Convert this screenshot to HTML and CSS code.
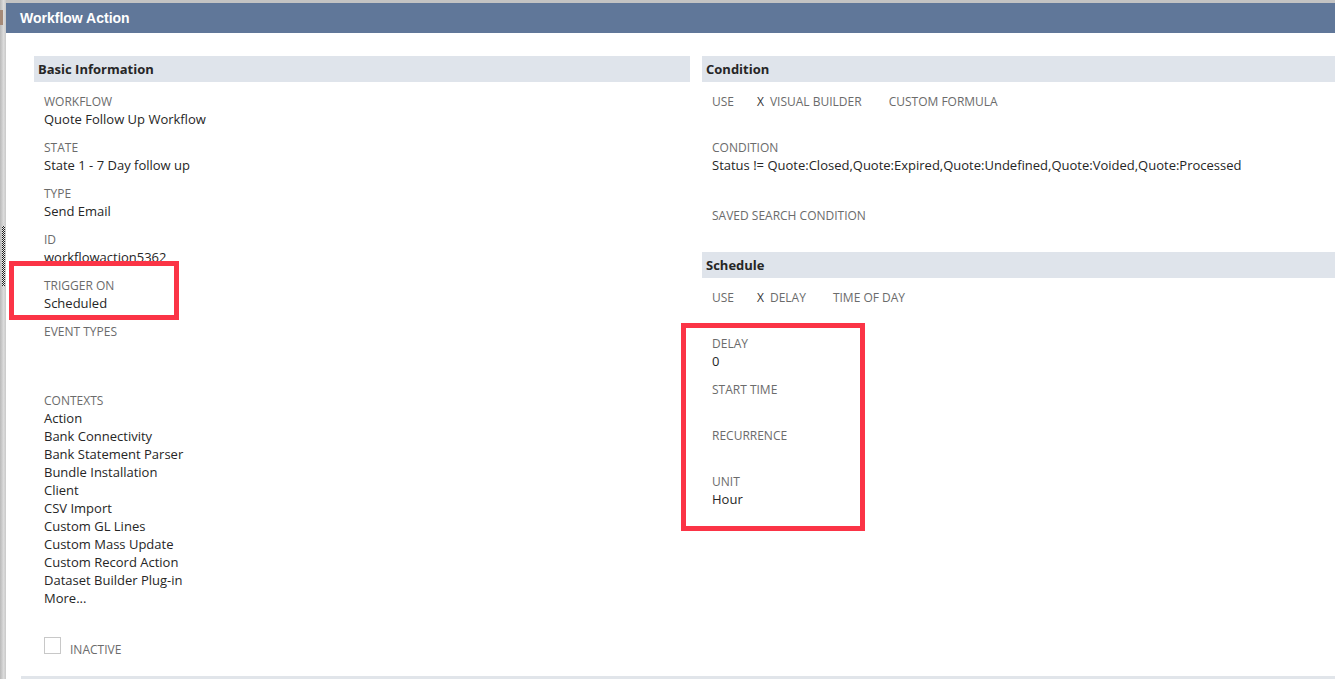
FILE: index.html
```html
<!DOCTYPE html>
<html lang="en">
<head>
  <meta charset="UTF-8" />
  <title>Workflow Action</title>
  <link rel="stylesheet" href="styles.css">
</head>
<body>

  <div class="page">
    <div class="edge">
      <span class="edge-tab"></span>
      <span class="edge-grip"></span>
    </div>

    <div class="dialog">
      <div class="titlebar">Workflow Action</div>

      <div class="dialog-body">
        <div class="columns">

          <div class="col">
            <h3 class="sec-head">Basic Information</h3>
            <div class="fields">
              <div class="field">
                <div class="lbl">Workflow</div>
                <div class="val">Quote Follow Up Workflow</div>
              </div>
              <div class="field">
                <div class="lbl">State</div>
                <div class="val">State 1 - 7 Day follow up</div>
              </div>
              <div class="field">
                <div class="lbl">Type</div>
                <div class="val">Send Email</div>
              </div>
              <div class="field">
                <div class="lbl">ID</div>
                <div class="val">workflowaction5362</div>
              </div>
              <div class="field">
                <div class="lbl">Trigger On</div>
                <div class="val">Scheduled</div>
              </div>
              <div class="field field-tall">
                <div class="lbl">Event Types</div>
                <div class="val"></div>
              </div>
              <div class="field">
                <div class="lbl">Contexts</div>
                <div class="val">Action</div>
                <div class="val">Bank Connectivity</div>
                <div class="val">Bank Statement Parser</div>
                <div class="val">Bundle Installation</div>
                <div class="val">Client</div>
                <div class="val">CSV Import</div>
                <div class="val">Custom GL Lines</div>
                <div class="val">Custom Mass Update</div>
                <div class="val">Custom Record Action</div>
                <div class="val">Dataset Builder Plug-in</div>
                <div class="val">More...</div>
              </div>
              <label class="check">
                <span class="box"></span>
                <span class="lbl">Inactive</span>
              </label>
            </div>
          </div>

          <div class="col">
            <h3 class="sec-head">Condition</h3>
            <div class="fields">
              <div class="use-row">
                <span class="use">Use</span>
                <span class="opt"><span class="x">X</span>Visual Builder</span>
                <span class="opt">Custom Formula</span>
              </div>
              <div class="field field-cond">
                <div class="lbl">Condition</div>
                <div class="val">Status != Quote:Closed,Quote:Expired,Quote:Undefined,Quote:Voided,Quote:Processed</div>
              </div>
              <div class="field field-last">
                <div class="lbl">Saved Search Condition</div>
              </div>
            </div>

            <h3 class="sec-head">Schedule</h3>
            <div class="fields">
              <div class="use-row">
                <span class="use">Use</span>
                <span class="opt"><span class="x">X</span>Delay</span>
                <span class="opt">Time of Day</span>
              </div>
              <div class="field">
                <div class="lbl">Delay</div>
                <div class="val">0</div>
              </div>
              <div class="field">
                <div class="lbl">Start Time</div>
                <div class="val"></div>
              </div>
              <div class="field">
                <div class="lbl">Recurrence</div>
                <div class="val"></div>
              </div>
              <div class="field">
                <div class="lbl">Unit</div>
                <div class="val">Hour</div>
              </div>
            </div>
          </div>

        </div>
      </div>

      <div class="footer-bar"></div>
    </div>

    <!-- annotation boxes drawn over the screenshot -->
    <div class="mark mark-trigger"></div>
    <div class="mark mark-schedule"></div>
  </div>

</body>
</html>
```

FILE: styles.css
```css
body {
  margin: 0;
  padding: 0;
  font-family: "Open Sans", "Liberation Sans", sans-serif;
  background: #fff;
  color: #262626;
}

.page {
  position: relative;
  display: flex;
  height: 679px;
  overflow: hidden;
}

/* strip of the page behind the dialog */
.edge {
  position: relative;
  flex: 0 0 6px;
  background: linear-gradient(to right, #b9b9b9, #dcdcdc 60%, #c9c9c9);
}

.edge-tab {
  position: absolute;
  left: 0;
  top: 10px;
  width: 3px;
  height: 15px;
  background: #a58a78;
}

.edge-grip {
  position: absolute;
  left: 2px;
  top: 226px;
  width: 3px;
  height: 60px;
  background: repeating-conic-gradient(#222 0 25%, #eee 0 50%) 0 0 / 2px 2px;
}

.dialog {
  flex: 1;
  display: flex;
  flex-direction: column;
  border-top: 3px solid #c3c3c3;
  min-width: 0;
}

.titlebar {
  height: 30px;
  line-height: 30px;
  padding-left: 14px;
  background: #607799;
  color: #fff;
  font-family: "Liberation Sans", Arial, sans-serif;
  font-weight: bold;
  font-size: 14px;
}

.dialog-body {
  flex: 1;
  padding: 23px 0 0 28px;
}

.columns {
  display: grid;
  grid-template-columns: 656px 656px;
  column-gap: 12px;
}

.sec-head {
  margin: 0;
  height: 26px;
  line-height: 26px;
  padding-left: 4px;
  background: #dfe4eb;
  font-size: 13px;
  font-weight: bold;
  color: #262626;
}

.fields {
  padding: 10px 0 0 10px;
}

.field {
  margin-bottom: 10px;
}

.field-tall {
  margin-bottom: 33px;
}

.field-cond {
  margin-bottom: 32px;
}

.field-last {
  margin-bottom: 28px;
}

.lbl {
  font-size: 12px;
  line-height: 18px;
  height: 18px;
  padding-top: 1px;
  margin-bottom: -1px;
  text-transform: uppercase;
  color: #6b6b6b;
}

.val {
  font-size: 13px;
  line-height: 18px;
  min-height: 18px;
  color: #262626;
}

.use-row {
  display: flex;
  height: 18px;
  line-height: 18px;
  padding-top: 1px;
  margin-bottom: 27px;
  font-size: 12px;
  text-transform: uppercase;
  color: #6b6b6b;
}

.use {
  width: 45px;
}

.opt {
  margin-right: 27px;
}

.x {
  margin-right: 6px;
  color: #333;
}

.check {
  display: flex;
  align-items: center;
  margin-top: 31px;
}

.check .box {
  width: 15px;
  height: 15px;
  border: 1px solid #c8c8c8;
  margin-right: 9px;
  position: relative;
  top: -2px;
}

.check .lbl {
  position: relative;
  top: 2px;
}

.footer-bar {
  height: 3px;
  margin-left: 15px;
  background: #e1e5ea;
}

/* red annotation rectangles */
.mark {
  position: absolute;
  border: 5px solid #fb3446;
  box-sizing: border-box;
}

.mark-trigger {
  left: 9px;
  top: 261px;
  width: 170px;
  height: 59px;
}

.mark-schedule {
  left: 681px;
  top: 323px;
  width: 184px;
  height: 208px;
}
```
